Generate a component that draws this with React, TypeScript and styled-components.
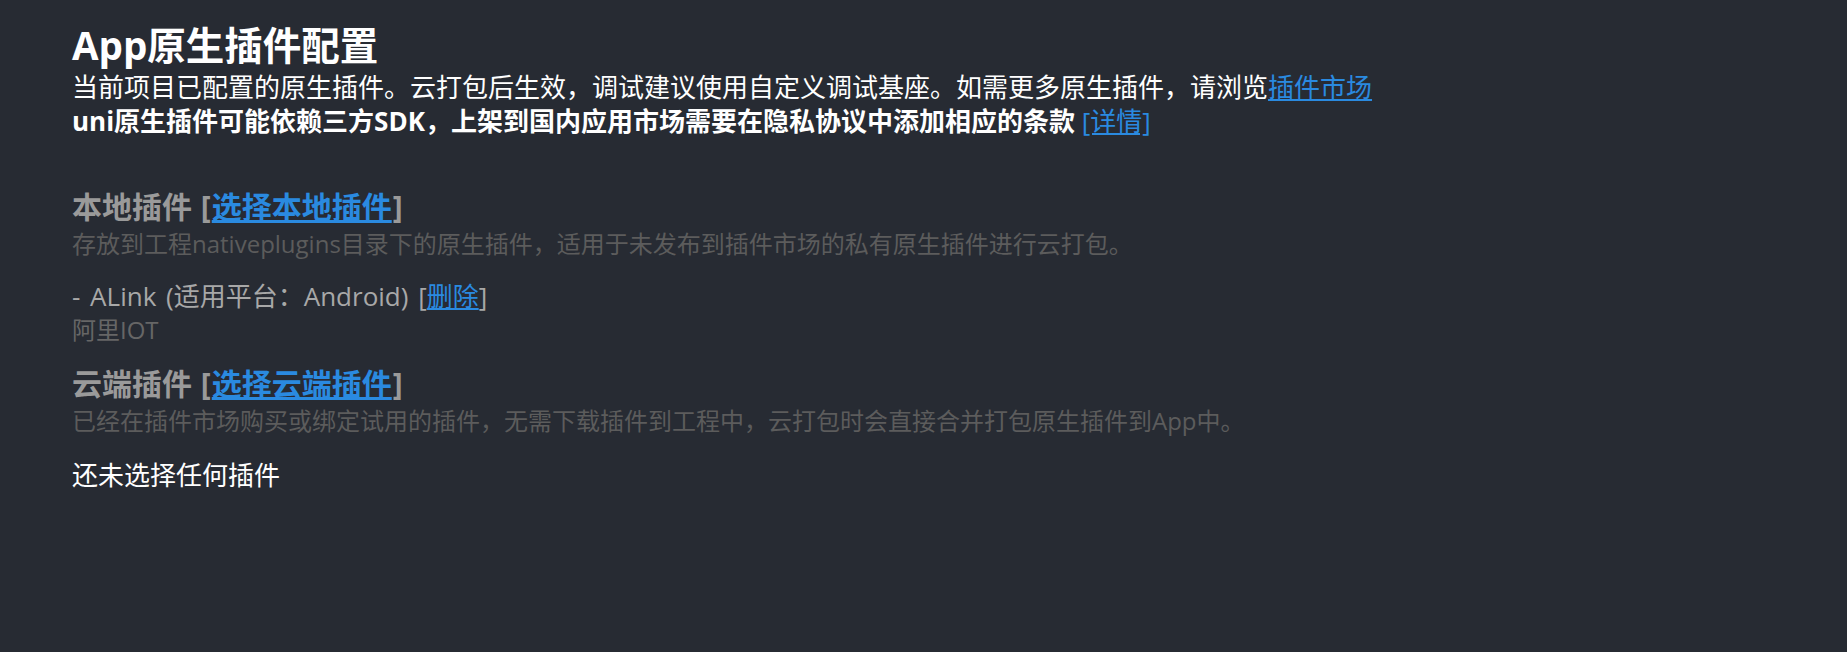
import React from "react";
import styled, { createGlobalStyle } from "styled-components";

const GlobalStyle = createGlobalStyle`
  html, body {
    margin: 0;
    padding: 0;
    background: #272b33;
  }
  body {
    font-family: "Open Sans", "Noto Sans CJK SC", sans-serif;
  }
`;

const Page = styled.div`
  min-height: 652px;
  box-sizing: border-box;
  padding: 21px 0 0 72px;
  background: #272b33;
  color: #ffffff;
  font-family: "Open Sans", "Noto Sans CJK SC", sans-serif;
`;

const Header = styled.header`
  display: flex;
  flex-direction: column;
`;

const Title = styled.h1`
  margin: 0;
  font-size: 38.5px;
  line-height: 49px;
  font-weight: 700;
  color: #ffffff;
`;

const Line = styled.p<{ $bold?: boolean }>`
  margin: 0;
  font-size: 26px;
  line-height: 34px;
  font-weight: ${(p) => (p.$bold ? 700 : 400)};
  color: #ffffff;
`;

const Link = styled.a<{ $plain?: boolean }>`
  color: #2a8ae0;
  font-weight: ${(p) => (p.$plain ? 400 : "inherit")};
  text-decoration: underline;
  text-underline-offset: 2px;
  cursor: pointer;
`;

const Section = styled.section<{ $top: number }>`
  display: flex;
  flex-direction: column;
  margin-top: ${(p) => p.$top}px;
`;

const SectionTitle = styled.h2`
  margin: 0;
  font-size: 30px;
  line-height: 36px;
  font-weight: 700;
  color: #9a9a9a;
`;

const Bracket = styled.span`
  margin: 0 1px;
`;

const Desc = styled.p`
  margin: 0;
  font-size: 24px;
  line-height: 38px;
  color: #5c5c5c;
`;

const PluginItem = styled.div`
  display: flex;
  flex-direction: column;
  margin-top: 16px;
`;

const PluginName = styled.div`
  font-size: 26px;
  line-height: 34px;
  word-spacing: 3px;
  color: #a8a8a8;
`;

const PluginNote = styled.div`
  font-size: 24px;
  line-height: 34px;
  color: #666666;
`;

const Empty = styled.div`
  margin-top: 18px;
  font-size: 26px;
  line-height: 34px;
  color: #ffffff;
`;

export default function App() {
  return (
    <>
      <GlobalStyle />
      <Page>
        <Header>
          <Title>App原生插件配置</Title>
          <Line>
            当前项目已配置的原生插件。云打包后生效，调试建议使用自定义调试基座。如需更多原生插件，请浏览
            <Link>插件市场</Link>
          </Line>
          <Line $bold>
            uni原生插件可能依赖三方SDK，上架到国内应用市场需要在隐私协议中添加相应的条款{" "}
            <Link $plain>[详情]</Link>
          </Line>
        </Header>

        <Section $top={51}>
          <SectionTitle>
            本地插件 <Bracket>[</Bracket>
            <Link>选择本地插件</Link>
            <Bracket>]</Bracket>
          </SectionTitle>
          <Desc>存放到工程nativeplugins目录下的原生插件，适用于未发布到插件市场的私有原生插件进行云打包。</Desc>
          <PluginItem>
            <PluginName>
              - ALink (适用平台：Android) [<Link>删除</Link>]
            </PluginName>
            <PluginNote>阿里IOT</PluginNote>
          </PluginItem>
        </Section>

        <Section $top={19}>
          <SectionTitle>
            云端插件 <Bracket>[</Bracket>
            <Link>选择云端插件</Link>
            <Bracket>]</Bracket>
          </SectionTitle>
          <Desc>已经在插件市场购买或绑定试用的插件，无需下载插件到工程中，云打包时会直接合并打包原生插件到App中。</Desc>
          <Empty>还未选择任何插件</Empty>
        </Section>
      </Page>
    </>
  );
}
